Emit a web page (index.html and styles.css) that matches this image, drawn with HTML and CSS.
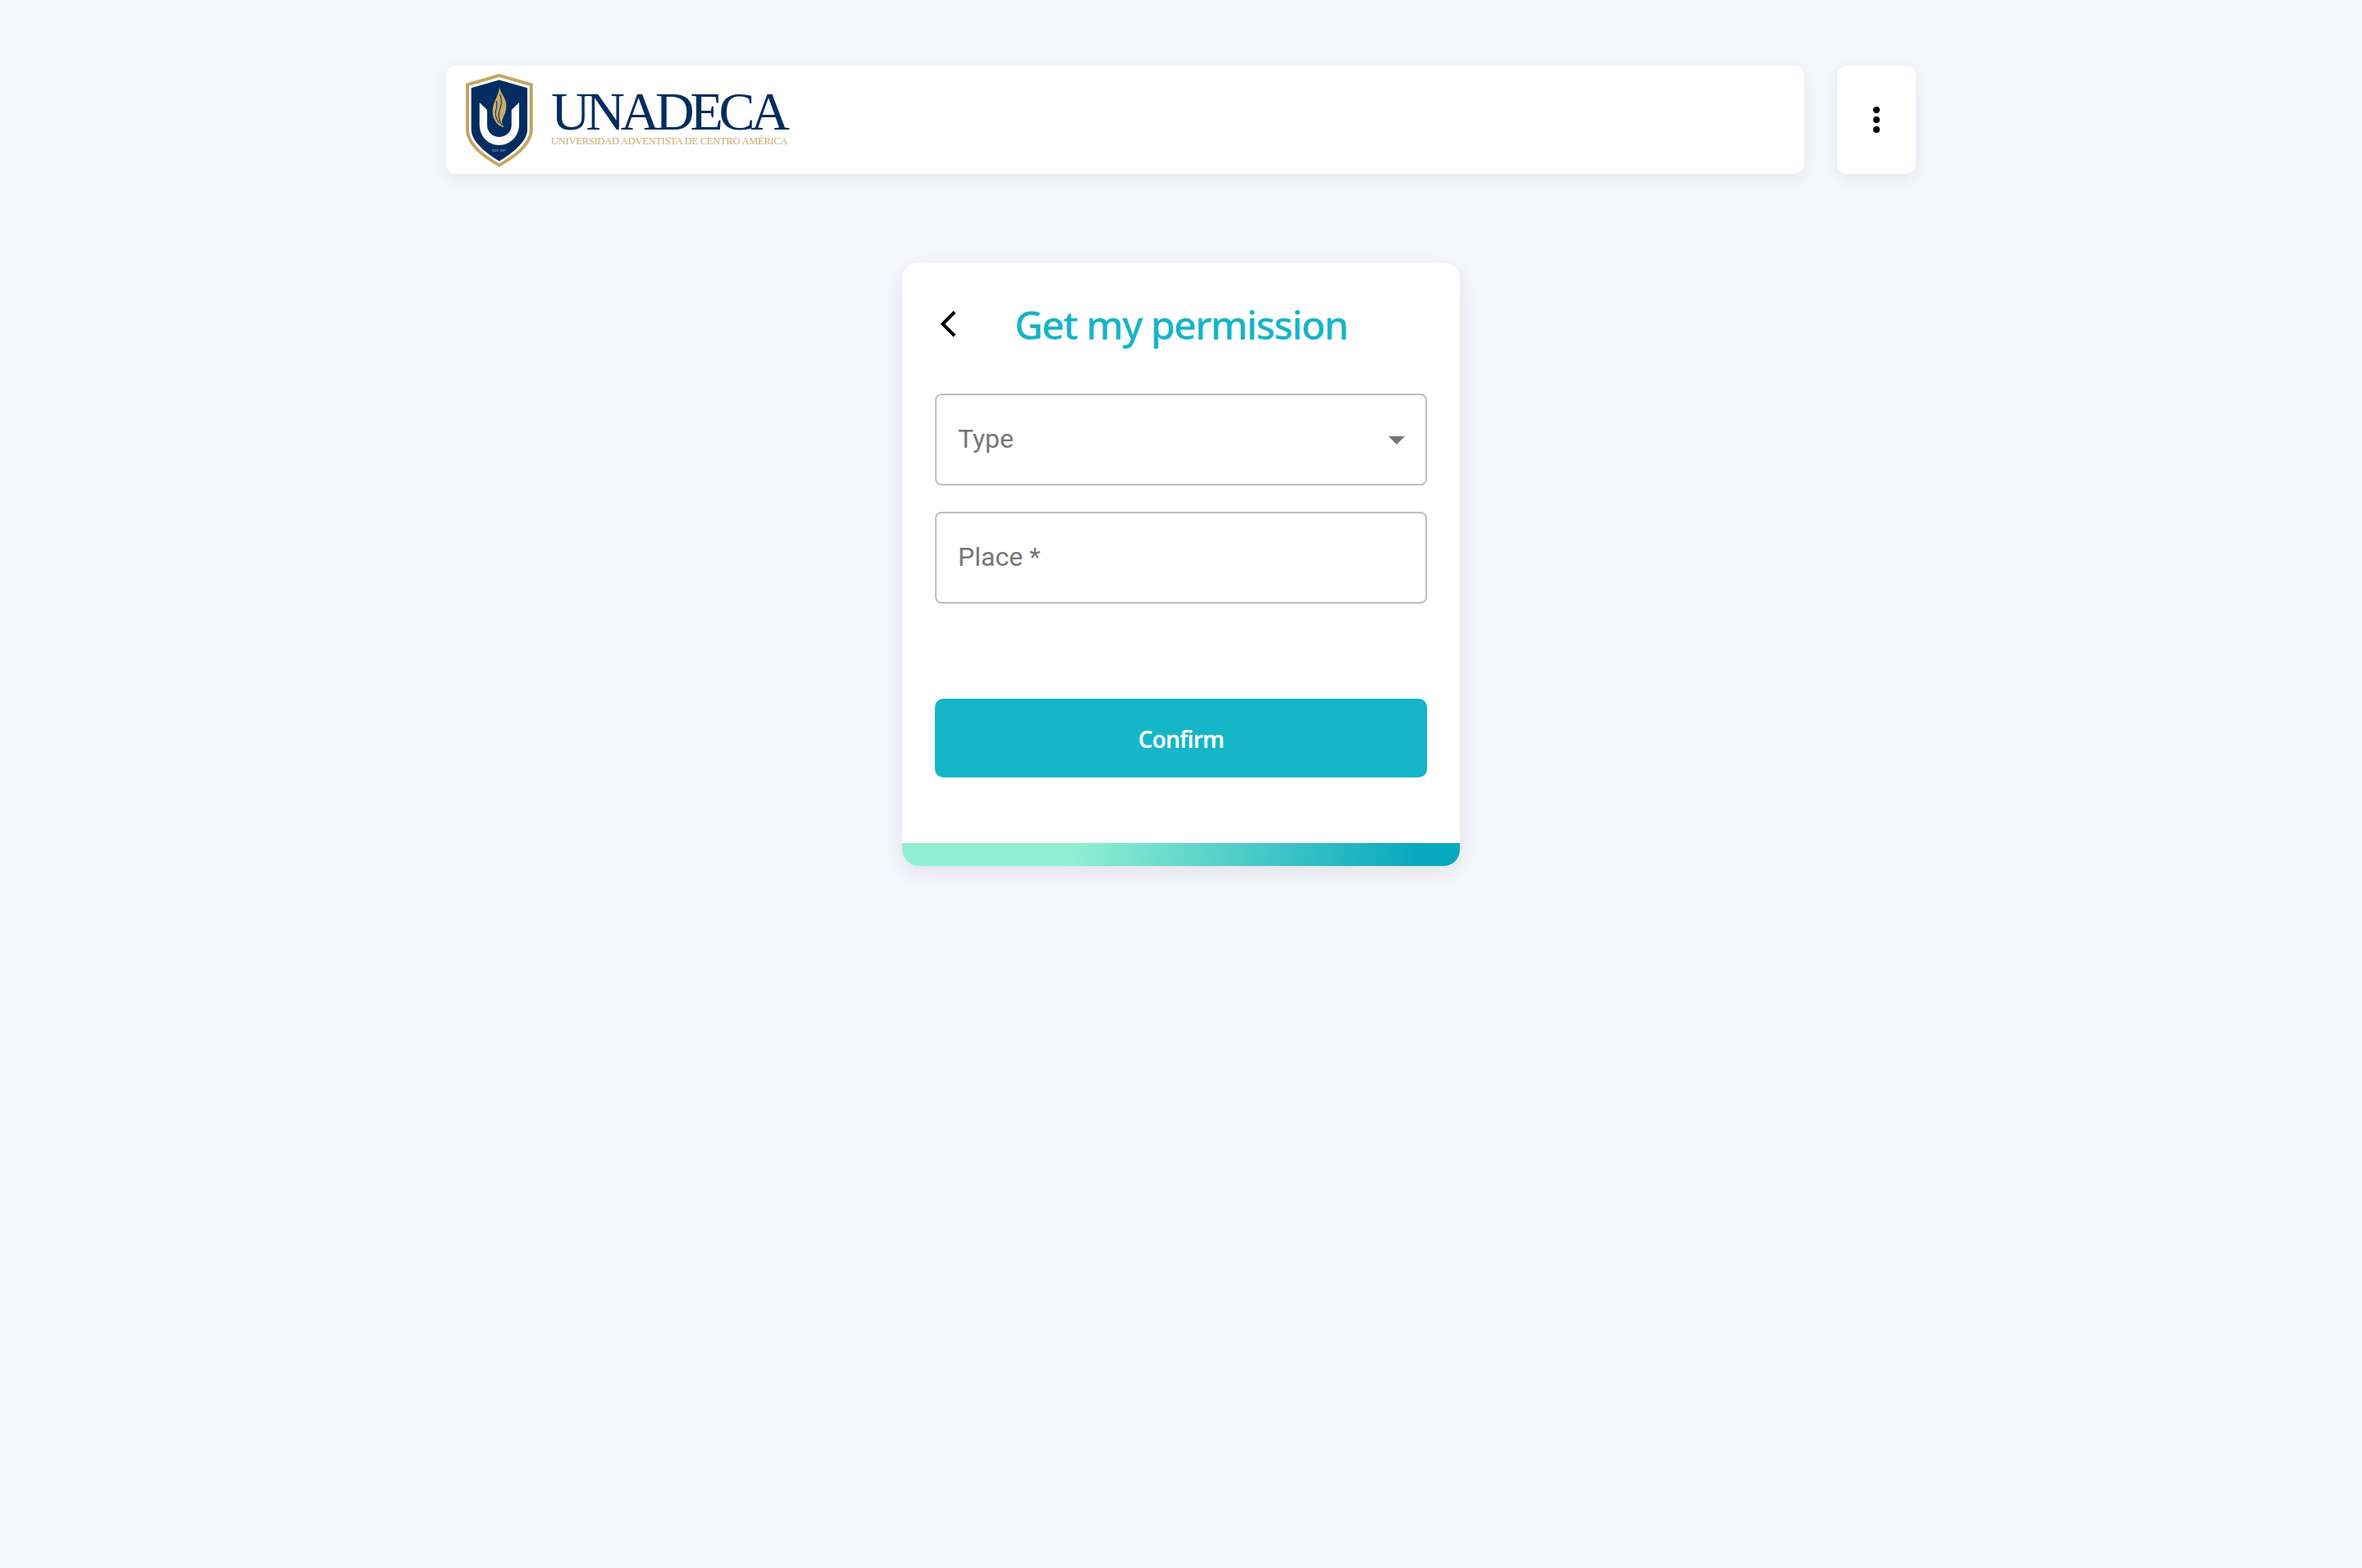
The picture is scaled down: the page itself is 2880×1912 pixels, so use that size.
FILE: index.html
```html
<!DOCTYPE html>
<html lang="en">
<head>
    <meta charset="UTF-8">
    <meta name="viewport" content="width=device-width, initial-scale=1.0">
    <title>Get my permission</title>
    <link rel="stylesheet" href="styles.css">
</head>
<body>
    <div class="page">
        <header class="topbar">
            <div class="brand-box">
                <svg class="shield" viewBox="0 0 82 114" aria-hidden="true">
                    <path fill="#c5a55e" d="M40.7 0 L81.7 11.7 V68 C81.7 86 62 102 40.7 113.5 C19.5 102 0 86 0 68 V11.7 Z"/>
                    <path fill="#fff" d="M40.7 4 L77.7 14.7 V68 C77.7 84 60 98.5 40.7 109.2 C21.5 98.5 4 84 4 68 V14.7 Z"/>
                    <path fill="#032d60" d="M40.7 7.6 L75 17.3 V68 C75 82 58 96 40.7 106.6 C23.5 96 6.6 82 6.6 68 V17.3 Z"/>
                    <path fill="#fff" d="M16.7 35 L26 44 V63 C26 71 33 77 40.7 77 C48.4 77 55.7 71 55.7 63 V44 L65 35 V62 C65 76 54 87 40.7 87 C27 87 16.7 76 16.7 62 Z"/>
                    <path fill="#c9ab66" d="M41 16 C42 24 50 30 49.4 40 C49 48 45 53 44 58 C44 61 45 64 47 65 C40 65 33 57 32.6 47 C32.3 34 40 28 41 16 Z"/>
                    <path fill="none" stroke="#032d60" stroke-width="1.1" d="M41.5 25 C44 31 44.5 36 41.5 43 C39 49 40 56 44 63 M37 33 C38.5 37 38 41 36.5 45 C35.5 49 37 55 40.5 60"/>
                    <text class="shield-est" x="40.7" y="95" text-anchor="middle">EST. 1927</text>
                </svg>
                <div class="brand-text">
                    <span class="brand-name">UNADECA</span>
                    <span class="brand-sub">UNIVERSIDAD ADVENTISTA DE CENTRO AMÉRICA</span>
                </div>
            </div>
            <div class="menu-box">
                <span class="dot"></span>
                <span class="dot"></span>
                <span class="dot"></span>
            </div>
        </header>

        <main class="card">
            <div class="card-body">
                <div class="card-head">
                    <svg class="back-icon" viewBox="0 0 20 32" aria-hidden="true">
                        <path fill="none" stroke="#000" stroke-width="4" d="M18 1.5 L3.5 16 L18 30.5"/>
                    </svg>
                    <h1 class="card-title">Get my permission</h1>
                    <span class="head-spacer"></span>
                </div>
                <div class="field field-select">
                    <span class="field-label">Type</span>
                    <span class="arrow"></span>
                </div>
                <div class="field">
                    <span class="field-label">Place *</span>
                </div>
                <button class="confirm-btn">Confirm</button>
            </div>
            <div class="card-strip"></div>
        </main>
    </div>
</body>
</html>
```

FILE: styles.css
```css
body {
    margin: 0;
    background-color: #f6f7fb;
    font-family: "Noto Sans", sans-serif;
    min-height: 1912px;
}
.page {
    width: 1792px;
    margin: 0 auto;
    padding-top: 80px;
}
.topbar {
    display: flex;
    gap: 40px;
    height: 132px;
}
.brand-box, .menu-box {
    background-color: white;
    border-radius: 12px;
    box-shadow: 0 6px 20px rgba(40, 50, 80, 0.08);
}
.brand-box {
    flex: 1;
    display: flex;
    align-items: flex-start;
    padding: 10px 0 0 24px;
    box-sizing: border-box;
}
.shield {
    width: 82px;
    height: 114px;
}
.shield-est {
    font-family: "Liberation Serif", serif;
    font-size: 4px;
    fill: #b9c4d4;
}
.brand-text {
    display: flex;
    flex-direction: column;
    margin-left: 22px;
    width: 292px;
}
.brand-name {
    font-family: "Liberation Serif", serif;
    font-size: 66px;
    line-height: 48px;
    letter-spacing: -5.3px;
    color: #032d60;
    margin-top: 22px;
    white-space: nowrap;
}
.brand-sub {
    font-family: "Liberation Serif", serif;
    font-size: 12.5px;
    line-height: 14px;
    letter-spacing: -0.25px;
    color: #c9ae6e;
    margin-top: 5px;
    white-space: nowrap;
}
.menu-box {
    width: 96px;
    display: flex;
    flex-direction: column;
    align-items: center;
    justify-content: center;
    gap: 4px;
}
.dot {
    width: 8px;
    height: 8px;
    border-radius: 50%;
    background-color: #000;
}
.card {
    width: 680px;
    margin: 108px auto 0;
    background-color: white;
    border-radius: 20px;
    box-shadow: 0 8px 24px rgba(40, 50, 80, 0.1);
    overflow: hidden;
}
.card-body {
    padding: 40px 40px 80px;
}
.card-head {
    display: flex;
    align-items: center;
    justify-content: space-between;
    height: 70px;
    margin-bottom: 50px;
}
.back-icon {
    width: 20px;
    height: 32px;
    margin-left: 6px;
}
.head-spacer {
    width: 26px;
}
.card-title {
    margin: 0;
    font-size: 48px;
    font-weight: 500;
    letter-spacing: -1.5px;
    color: #13b5c8;
}
.field {
    display: flex;
    align-items: center;
    justify-content: space-between;
    box-sizing: border-box;
    height: 112px;
    margin-bottom: 32px;
    padding: 0 25px 2px 26px;
    border: 2px solid #bfbfbf;
    border-radius: 8px;
}
.field-label {
    font-family: Roboto, sans-serif;
    font-size: 32px;
    color: #777;
}
.arrow {
    width: 0;
    height: 0;
    border-left: 10px solid transparent;
    border-right: 10px solid transparent;
    border-top: 10px solid #757575;
    margin-top: 4px;
}
.confirm-btn {
    display: block;
    width: 100%;
    height: 96px;
    margin-top: 116px;
    padding-top: 3px;
    background-color: #14b6c8;
    color: white;
    border: none;
    border-radius: 10px;
    font-family: "Noto Sans", sans-serif;
    font-size: 28px;
    font-weight: 600;
    letter-spacing: -0.8px;
}
.card-strip {
    height: 28px;
    background: linear-gradient(100deg, #93efd2 30%, #07a9bf 92%);
}
```
